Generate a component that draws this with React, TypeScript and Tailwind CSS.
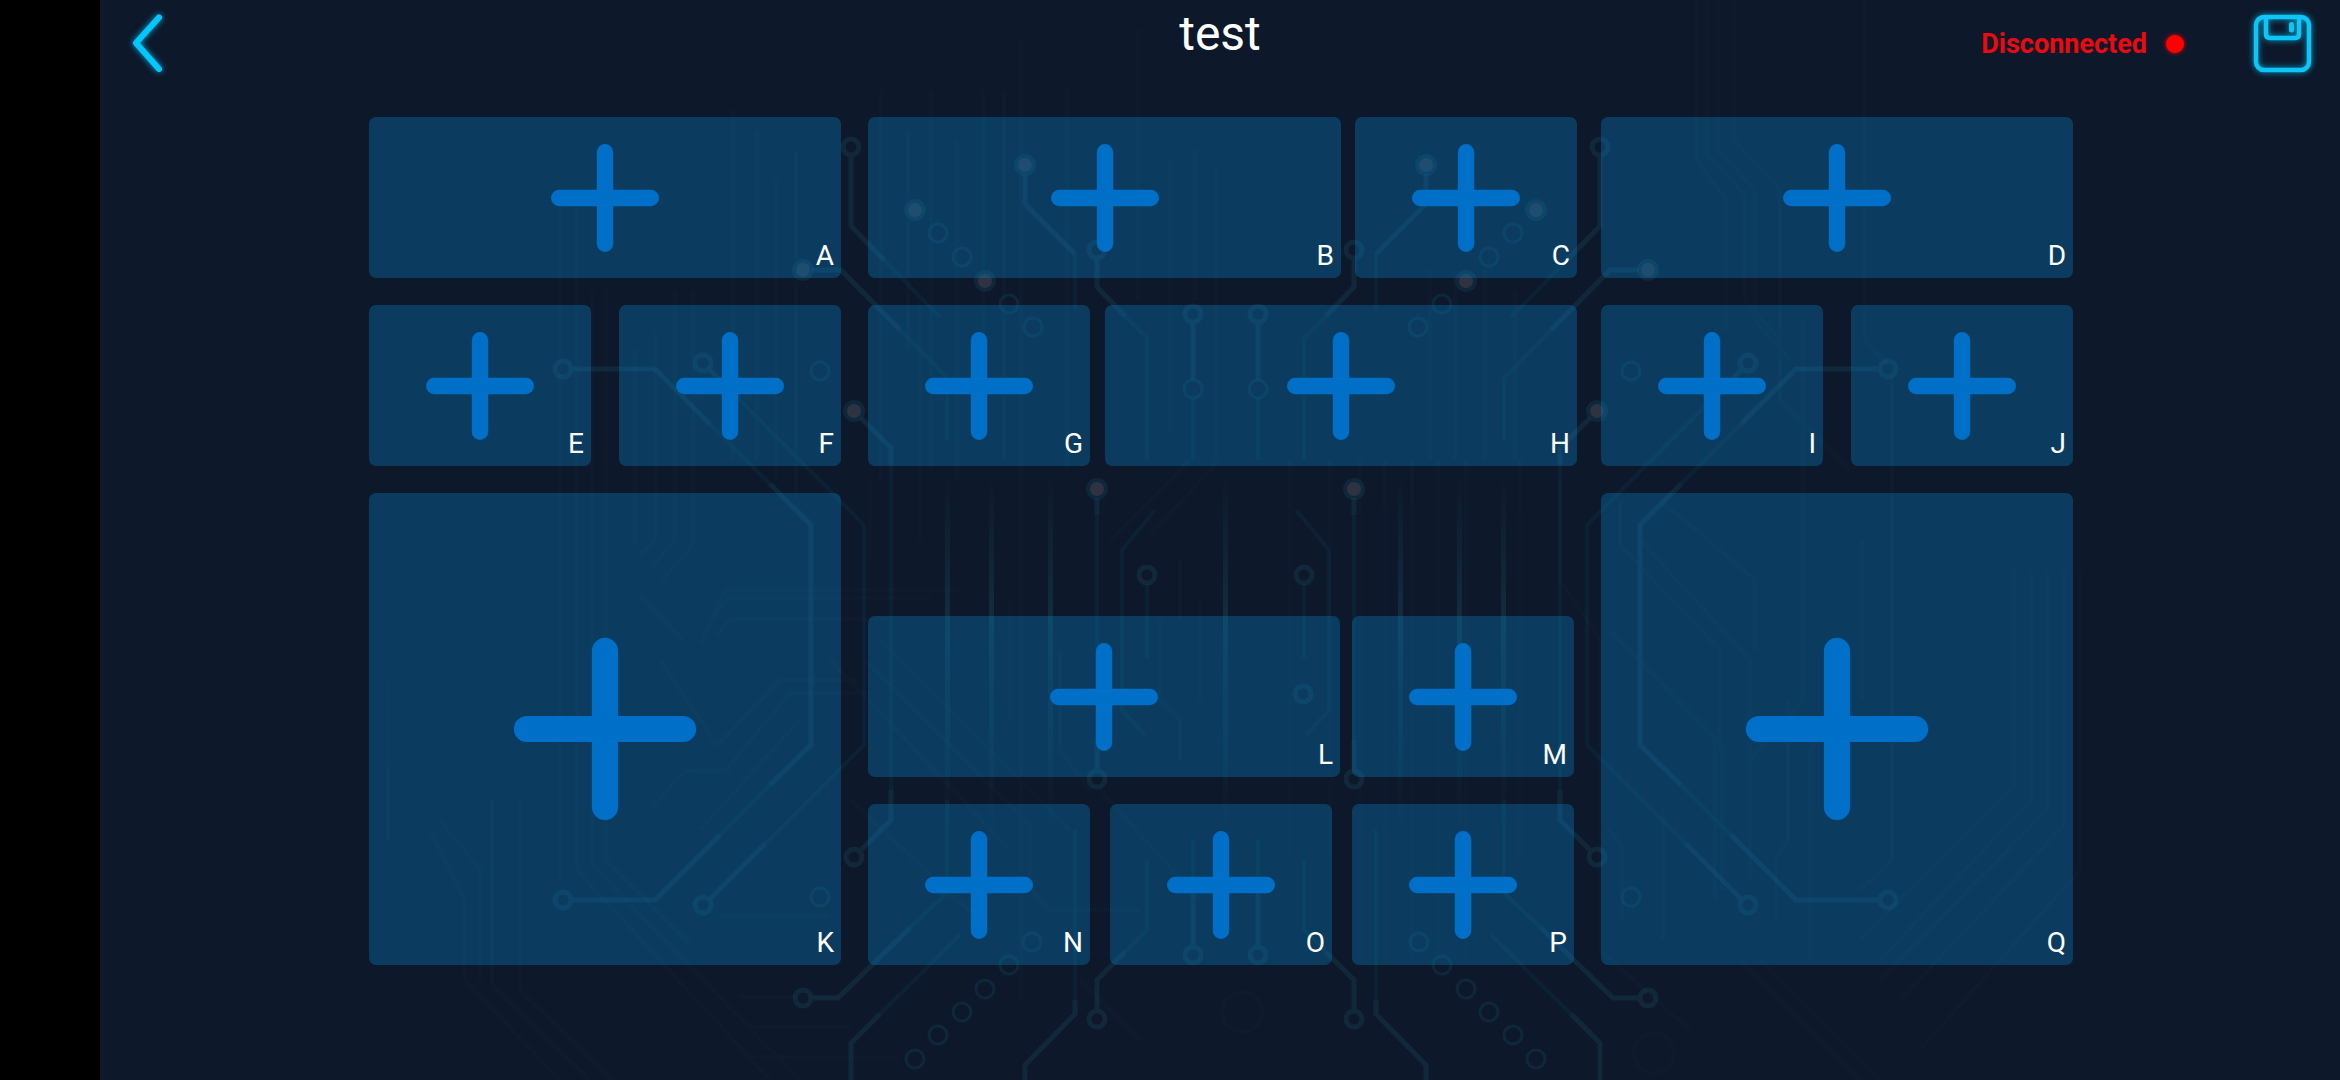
type KeyProps = { label: string; size?: "single" | "double" | "large" };

const KEY_SIZES = {
  single: "h-[161px] w-[222px] shrink-0",
  double: "h-[161px] min-w-0 flex-1",
  large: "h-[472px] w-full",
};

function Key({ label, size = "single" }: KeyProps) {
  const large = size === "large";
  return (
    <button
      type="button"
      aria-label={`Assign ${label}`}
      className={`relative flex items-center justify-center rounded-[7px] bg-[#0878b8]/38 ${KEY_SIZES[size]}`}
    >
      <svg
        viewBox="0 0 108 108"
        className={large ? "size-[184px]" : "size-[108px]"}
        stroke="#006fc8"
        strokeWidth={large ? 15.4 : 16.4}
        strokeLinecap="round"
        aria-hidden="true"
      >
        <path d="M54 8.2V99.8M8.2 54H99.8" />
      </svg>
      <span className="absolute right-[7px] bottom-1.5 text-[28px] leading-8 text-white">{label}</span>
    </button>
  );
}

type Point = [number, number];

const RINGS: Point[] = [
  [851, 147], [1097, 250], [1193, 314], [563, 369], [703, 363],
  [1147, 575], [1097, 779], [854, 857], [563, 900], [703, 905], [803, 998],
  [1193, 955], [1097, 1019],
];
const THIN_RINGS: Point[] = [
  [938, 233], [962, 257], [1009, 304], [1033, 327], [820, 371], [1193, 389],
  [820, 897], [1032, 942], [1009, 965], [985, 989], [962, 1012], [938, 1035], [915, 1059],
];
const PADS: Point[] = [[1025, 165], [915, 210], [803, 270], [985, 281], [854, 411], [1097, 489]];

const BRIGHT = [
  "M851 156V226L884 260", "M1025 174V204L1075 254", "M812 270H841L900 330", "M1097 259V287L1125 316",
  "M1193 323V380", "M572 369H655L710 424", "M710 370L735 395", "M770 484L811 525V745L770 785",
  "M572 900H655L720 835", "M710 899L765 844", "M861 418L891 448V465", "M891 790V820L861 850",
  "M812 998H838L910 928", "M1125 952L1097 980V1010", "M1193 880V946", "M1075 1000V1014L1025 1065V1080",
  "M880 1014L851 1043V1080", "M1097 498V515", "M1097 740V770",
];
const SOFT = [
  "M884 260L940 317", "M1075 254V310", "M900 330L947 378V440", "M1125 316L1147 338V460",
  "M710 424L770 484", "M735 395L864 525V745L765 844", "M770 785L720 835", "M891 465V790",
  "M910 928L947 893V800", "M1147 860V930L1125 952", "M1193 398V460M1193 840V880", "M1075 830V1000",
  "M960 935L880 1014", "M1097 515V740", "M1147 584V658", "M1155 510L1122 550V710L1145 735",
];
const FAINT = [
  "M560 205V880", "M577 205V870L770 1080", "M592 290V865L800 1080", "M606 290V860L690 944",
  "M635 350V545", "M655 330V540L640 556", "M675 290V540L650 570", "M693 290V545L662 580",
  "M733 110V460", "M757 130V460", "M776 180V480", "M796 150V500", "M388 680V840", "M492 800V985L590 1080",
  "M520 800V990L612 1080", "M430 830L465 900V980L560 1080", "M440 820L480 870V980",
  "M881 90V480", "M908 130V350", "M931 90V470", "M957 140V480", "M983 90V400", "M1004 90V460", "M1021 40V1000",
  "M1067 85V470", "M1138 30V300", "M1170 160V430", "M1195 150V300", "M1216 165V460",
  "M700 645L725 590H960", "M712 620L728 598H930", "M716 636L730 619H890",
  "M640 595L683 640", "M660 660L717 745L780 680H860", "M730 770L682 771", "M650 810L685 771H725L790 693H870",
  "M865 660L1030 825V890L1050 910H1140", "M880 640L1070 830", "M830 660L1010 850", "M850 800L990 930",
  "M800 720L700 830", "M1010 600V720", "M1060 650V750L1090 790", "M1160 620V700L1180 720V760",
  "M740 997H840M745 1027H850M745 1057H900", "M1100 790L1200 900M1080 980L1140 1040", "M1190 460L1110 540M1215 465L1150 535",
  "M830 916H720", "M920 300V540M870 480V560M1180 560V620M1200 600V700",
];
const RIGHT_FAINT = [
  "M1290 460V860M1330 460V860M1360 460V960M1385 460V960M1412 460V960M1438 460V960M1466 460V960M1520 460V860",
  "M1430 270V460M1455 270V460M1485 270V460M1515 290V460",
  "M1697 0V160L1726 200V330", "M1707 0V155L1745 195V300L1780 340", "M1718 0V150L1755 190V320L1790 360",
  "M1734 0V140L1780 190V400L1850 470", "M1865 0V340L1892 370V860L1860 890", "M1803 320V700L1750 760V880",
  "M1862 540V700M2014 570V785L1860 940", "M2031 570V800L1880 960", "M2047 570V810L1880 980",
  "M2064 570V825L1900 1000", "M2080 570V870L1920 1050", "M1620 500V545L1720 650V750",
  "M1640 540L1750 660V860", "M1660 500L1755 580V650", "M1610 630L1715 740V900", "M1630 650L1722 745V890",
  "M1600 820L1622 845V920", "M1663 810V940", "M1788 700V840L1776 860V920", "M1810 960V750L1830 720",
  "M1740 960L1860 1080", "M1760 960L1880 1080", "M1560 480V580L1600 640V950L1690 1030",
];

function HalfBoard() {
  return (
    <>
      <g stroke="#0c3a50" strokeWidth="4" opacity="0.28">
        {SOFT.map((d) => <path key={d} d={d} />)}
      </g>
      <g stroke="#1c5568" strokeWidth="5" opacity="0.27">
        {BRIGHT.map((d) => <path key={d} d={d} />)}
        {RINGS.map(([x, y]) => <circle key={`${x}-${y}`} cx={x} cy={y} r="8" />)}
      </g>
      <g stroke="#0f5068" strokeWidth="3" opacity="0.28">
        {THIN_RINGS.map(([x, y]) => <circle key={`${x}-${y}`} cx={x} cy={y} r="9" />)}
      </g>
      {PADS.map(([x, y]) => (
        <g key={`${x}-${y}`} stroke="none">
          <circle cx={x} cy={y} r="11" fill="#175064" opacity="0.28" />
          <circle cx={x} cy={y} r="7" fill="#54404c" opacity="0.45" />
        </g>
      ))}
      {[947, 991, 1050].map((x) => (
        <rect key={x} x={x - 2} y="470" width="5" height="360" fill="url(#trace-fade)" stroke="none" />
      ))}
    </>
  );
}

function CircuitBackdrop() {
  return (
    <svg
      viewBox="100 0 2240 1080"
      preserveAspectRatio="xMidYMin slice"
      className="absolute inset-0 size-full"
      fill="none"
      aria-hidden="true"
    >
      <defs>
        <linearGradient id="trace-fade" x1="0" y1="0" x2="0" y2="1">
          <stop offset="0" stopColor="#1c5568" stopOpacity="0" />
          <stop offset="0.4" stopColor="#1c5568" stopOpacity="0.32" />
          <stop offset="0.6" stopColor="#1c5568" stopOpacity="0.22" />
          <stop offset="1" stopColor="#1c5568" stopOpacity="0" />
        </linearGradient>
      </defs>
      <g stroke="#1d2a48" strokeWidth="4" opacity="0.13">
        {FAINT.map((d) => <path key={d} d={d} />)}
        {RIGHT_FAINT.map((d) => <path key={d} d={d} />)}
        <circle cx="1242" cy="1012" r="20" />
        <circle cx="1654" cy="1053" r="20" />
      </g>
      <HalfBoard />
      <g transform="translate(2451 0) scale(-1 1)">
        <HalfBoard />
      </g>
      <rect x="1223" y="470" width="5" height="360" fill="url(#trace-fade)" />
      <circle cx="1303" cy="694" r="8" stroke="#1c5568" strokeWidth="5" opacity="0.27" />
    </svg>
  );
}

function BackIcon() {
  return (
    <svg viewBox="0 0 42 68" className="h-[68px] w-[42px] drop-shadow-[0_0_3px_#00a6d6]" fill="none" aria-hidden="true">
      <path d="M32 8.5L9 34L32 60" stroke="#00c8ff" strokeWidth="6" strokeLinecap="round" strokeLinejoin="round" />
    </svg>
  );
}

function SaveIcon() {
  return (
    <svg viewBox="0 0 68 68" className="size-[68px] drop-shadow-[0_0_3px_#00a6d6]" fill="none" stroke="#0cc6f8" aria-hidden="true">
      <rect x="8" y="8" width="53" height="53" rx="8" strokeWidth="4.5" />
      <path d="M18 8V25Q18 29 22 29H47Q51 29 51 25V8" strokeWidth="4.5" />
      <path d="M43.5 15.5V21" strokeWidth="5" strokeLinecap="round" />
    </svg>
  );
}

export default function App() {
  return (
    <div className="flex min-h-screen bg-black font-[Roboto,sans-serif]">
      <div className="relative ml-[100px] flex-1 overflow-hidden bg-[#0d182a]">
        <CircuitBackdrop />
        <div className="relative">
          <header className="grid h-[117px] grid-cols-[1fr_auto_1fr] items-start px-6">
            <button type="button" aria-label="Back" className="mt-[9px] ml-[3px] justify-self-start">
              <BackIcon />
            </button>
            <h1 className="mt-1.5 text-5xl leading-[56px] text-white">test</h1>
            <div className="mt-[9px] flex items-center justify-self-end">
              <p className="pt-0.5 text-[27px] leading-8 font-bold text-[#ea0a10]">Disconnected</p>
              <span className="mt-0.5 ml-[19px] size-[18px] rounded-full bg-[#ff0000] shadow-[0_0_4px_#ff0000]" />
              <button type="button" aria-label="Save" className="ml-16">
                <SaveIcon />
              </button>
            </div>
          </header>
          <main className="grid grid-cols-[472fr_712fr_472fr] gap-x-6 gap-y-[27px] pr-[267px] pb-[115px] pl-[269px]">
            <div className="flex">
              <Key label="A" size="double" />
            </div>
            <div className="flex gap-[14px] pl-[3px]">
              <Key label="B" size="double" />
              <Key label="C" />
            </div>
            <div className="flex">
              <Key label="D" size="double" />
            </div>
            <div className="flex justify-between">
              <Key label="E" />
              <Key label="F" />
            </div>
            <div className="flex gap-[15px] pl-[3px]">
              <Key label="G" />
              <Key label="H" size="double" />
            </div>
            <div className="flex justify-between">
              <Key label="I" />
              <Key label="J" />
            </div>
            <Key label="K" size="large" />
            <div className="flex flex-col justify-end gap-[27px] px-[3px]">
              <div className="flex gap-3">
                <Key label="L" size="double" />
                <Key label="M" />
              </div>
              <div className="flex justify-between">
                <Key label="N" />
                <Key label="O" />
                <Key label="P" />
              </div>
            </div>
            <Key label="Q" size="large" />
          </main>
        </div>
      </div>
    </div>
  );
}
